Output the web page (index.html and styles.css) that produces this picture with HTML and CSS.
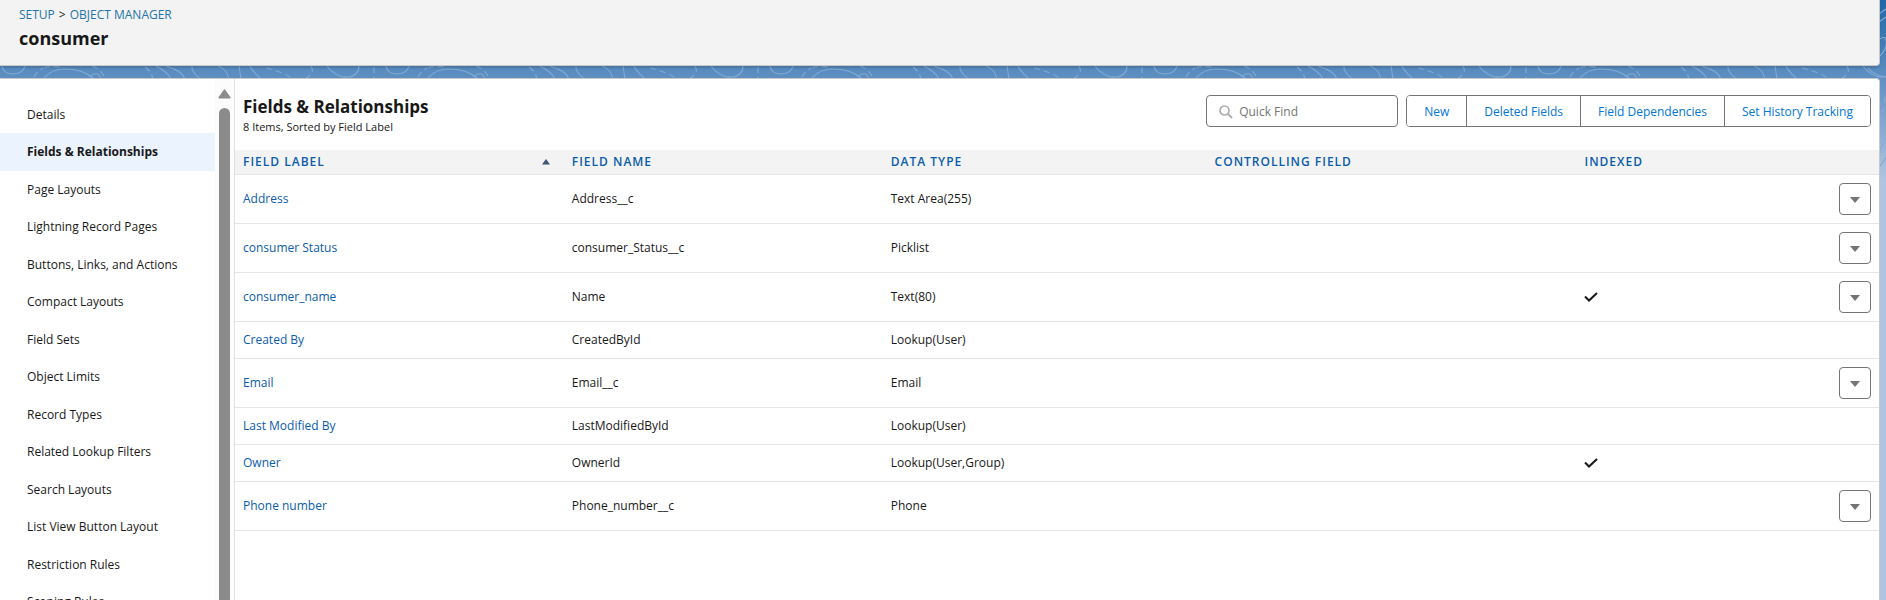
FILE: index.html
```html
<!DOCTYPE html>
<html lang="en">
<head>
<meta charset="utf-8">
<title>consumer | Object Manager</title>
<link rel="stylesheet" href="styles.css">
</head>
<body>
<svg class="backdrop" aria-hidden="true">
  <defs>
    <pattern id="contours" x="44" y="66" width="384" height="600" patternUnits="userSpaceOnUse">
      <g class="contour">
        <path d="M0 12C6 5 12 3 21 3C33 3 42 6 49 12M46 11C49 6 57 7 56 12M112 0C118 3 124 7 127 13M122 0C132 3 139 7 141 13M148 0C147 5 151 9 157 13M174 0C181 3 185 8 184 13M195 0L197 13M206 0C208 5 212 8 217 13M283 0C287 6 296 12 303 11C311 11 315 6 315 0M342 0C343 6 348 8 353 8C359 8 364 5 365 0"/>
        <path class="dash" d="M0 2C5 0 10 0 16 1M48 0C54 2 57 5 60 10M101 1C105 4 108 8 109 13M222 2C234 5 242 8 249 13M267 0C270 5 268 9 261 13M330 1V13M374 11C376 7 379 4 383 2"/>
      </g>
    </pattern>
  </defs>
  <rect width="100%" height="78" y="0" fill="url(#contours)"/>
</svg>
<svg class="edge" viewBox="0 0 18 200" aria-hidden="true">
  <g class="contour">
    <path d="M11 14L18 9M11 22L18 17M12 39C18 34 20 42 17 49C15 53 13 55 12 56M-2 66C4 73 10 76 18 77M12 150C14 146 16 142 18 137M12 166C15 162 16 160 18 158"/>
    <path class="dash" d="M12 122C15 112 16 106 17 96"/>
  </g>
</svg>
<header class="page-header">
  <nav class="crumbs" aria-label="Breadcrumb"><a href="#">SETUP</a><span>&gt;</span><a href="#">OBJECT MANAGER</a></nav>
  <h1>consumer</h1>
</header>
<div class="card">
  <aside class="sidebar">
    <nav class="side-nav" aria-label="Object settings">
      <a href="#">Details</a>
      <a href="#" class="active" aria-current="page">Fields &amp; Relationships</a>
      <a href="#">Page Layouts</a>
      <a href="#">Lightning Record Pages</a>
      <a href="#">Buttons, Links, and Actions</a>
      <a href="#">Compact Layouts</a>
      <a href="#">Field Sets</a>
      <a href="#">Object Limits</a>
      <a href="#">Record Types</a>
      <a href="#">Related Lookup Filters</a>
      <a href="#">Search Layouts</a>
      <a href="#">List View Button Layout</a>
      <a href="#">Restriction Rules</a>
      <a href="#">Scoping Rules</a>
    </nav>
    <div class="scrollbar" aria-hidden="true">
      <svg width="13" height="10" viewBox="0 0 13 10"><path d="M6.500 1.200L11.800 8.800H1.200Z" fill="#8b8b8b" stroke="#8b8b8b" stroke-width="1.600" stroke-linejoin="round"/></svg>
      <div class="thumb"></div>
    </div>
  </aside>
  <main class="content">
    <div class="toolbar">
      <div class="heading">
        <h2>Fields &amp; Relationships</h2>
        <p>8 Items, Sorted by Field Label</p>
      </div>
      <label class="search">
        <svg width="14" height="14" viewBox="0 0 14 14" aria-hidden="true"><circle cx="5.500" cy="5.500" r="4.500" fill="none" stroke="#aeaeae" stroke-width="1.700"/><path d="M9 9L13 13" stroke="#aeaeae" stroke-width="2"/></svg>
        <input type="search" placeholder="Quick Find" aria-label="Quick Find">
      </label>
      <div class="button-group">
        <button type="button">New</button>
        <button type="button">Deleted Fields</button>
        <button type="button">Field Dependencies</button>
        <button type="button">Set History Tracking</button>
      </div>
    </div>
    <table>
      <colgroup><col class="c-label"><col class="c-name"><col class="c-type"><col class="c-control"><col class="c-indexed"><col class="c-action"></colgroup>
      <thead>
        <tr>
          <th scope="col"><span class="sorted">FIELD LABEL<svg width="8" height="6" viewBox="0 0 8 6" aria-hidden="true"><path d="M4 0L8 5.500H0Z" fill="#3e5574"/></svg></span></th>
          <th scope="col">FIELD NAME</th><th scope="col">DATA TYPE</th><th scope="col">CONTROLLING FIELD</th><th scope="col">INDEXED</th><th></th>
        </tr>
      </thead>
      <tbody>
        <tr class="tall"><td><a href="#">Address</a></td><td>Address__c</td><td>Text Area(255)</td><td></td><td></td><td><button type="button" class="menu" aria-label="Actions for Address"><svg width="10" height="6" viewBox="0 0 10 6"><path d="M0 0H10L5 6Z"/></svg></button></td></tr>
        <tr class="tall"><td><a href="#">consumer Status</a></td><td>consumer_Status__c</td><td>Picklist</td><td></td><td></td><td><button type="button" class="menu" aria-label="Actions for consumer Status"><svg width="10" height="6" viewBox="0 0 10 6"><path d="M0 0H10L5 6Z"/></svg></button></td></tr>
        <tr class="tall"><td><a href="#">consumer_name</a></td><td>Name</td><td>Text(80)</td><td></td><td><svg class="check" width="14" height="10" viewBox="0 0 14 10" role="img" aria-label="Indexed"><path d="M1 4.500L5 8.500L13 1"/></svg></td><td><button type="button" class="menu" aria-label="Actions for consumer_name"><svg width="10" height="6" viewBox="0 0 10 6"><path d="M0 0H10L5 6Z"/></svg></button></td></tr>
        <tr><td><a href="#">Created By</a></td><td>CreatedById</td><td>Lookup(User)</td><td></td><td></td><td></td></tr>
        <tr class="tall"><td><a href="#">Email</a></td><td>Email__c</td><td>Email</td><td></td><td></td><td><button type="button" class="menu" aria-label="Actions for Email"><svg width="10" height="6" viewBox="0 0 10 6"><path d="M0 0H10L5 6Z"/></svg></button></td></tr>
        <tr><td><a href="#">Last Modified By</a></td><td>LastModifiedById</td><td>Lookup(User)</td><td></td><td></td><td></td></tr>
        <tr><td><a href="#">Owner</a></td><td>OwnerId</td><td>Lookup(User,Group)</td><td></td><td><svg class="check" width="14" height="10" viewBox="0 0 14 10" role="img" aria-label="Indexed"><path d="M1 4.500L5 8.500L13 1"/></svg></td><td></td></tr>
        <tr class="tall"><td><a href="#">Phone number</a></td><td>Phone_number__c</td><td>Phone</td><td></td><td></td><td><button type="button" class="menu" aria-label="Actions for Phone number"><svg width="10" height="6" viewBox="0 0 10 6"><path d="M0 0H10L5 6Z"/></svg></button></td></tr>
      </tbody>
    </table>
  </main>
</div>
</body>
</html>
```
FILE: styles.css
```css
* { box-sizing: border-box; }

body {
  margin: 0;
  height: 100vh;
  display: flex;
  flex-direction: column;
  gap: 12px;
  padding-right: 6px;
  overflow: hidden;
  position: relative;
  background: #b0c4df linear-gradient(#1f67a9 0, #5a8cc0 72px, #b0c4df 180px) no-repeat;
  color: #181818;
  font: 12px/18px "Open Sans", "Noto Sans", sans-serif;
}

a { color: #0b5cab; text-decoration: none; }

h1, h2, p { margin: 0; }

.backdrop {
  position: absolute;
  left: 0;
  top: 0;
  width: 100%;
  height: 78px;
}

.edge {
  position: absolute;
  right: 0;
  top: 0;
  width: 18px;
  height: 200px;
}

.contour { fill: none; stroke: #84aad3; stroke-width: 1.1; }
.dash { stroke-dasharray: 6 4; }

.page-header {
  position: relative;
  padding: 6px 19px 13px;
  background: #f3f3f3;
  border: solid #c9c9c9;
  border-width: 0 1px 1px 0;
  border-radius: 0 0 4px 0;
  box-shadow: 0 2px 2px rgba(0, 0, 0, .15);
}

.crumbs { display: flex; gap: 4px; }
.crumbs a { color: #2574a9; }

h1 { font-size: 18px; line-height: 28px; }

.card {
  position: relative;
  flex: 1;
  min-height: 0;
  display: flex;
  background: #fff;
  border: solid #c9c9c9;
  border-width: 1px 1px 0 0;
  border-radius: 0 4px 0 0;
  overflow: hidden;
}

.sidebar {
  flex: none;
  width: 235px;
  display: flex;
  border-right: 1px solid #e0e0e0;
}

.side-nav {
  flex: 1;
  display: flex;
  flex-direction: column;
  padding-top: 17px;
  overflow: hidden;
}

.side-nav a {
  flex: none;
  height: 37px;
  padding-left: 27px;
  line-height: 37px;
  color: #181818;
}
.side-nav a:nth-child(even) { height: 38px; line-height: 38px; }
.side-nav .active { background: #eaf3fe; font-weight: 700; }

.scrollbar {
  width: 19px;
  display: flex;
  flex-direction: column;
  align-items: center;
  gap: 9px;
  padding-top: 10px;
  background: #fcfcfc;
}
.scrollbar svg { flex: none; }
.thumb {
  flex: 1;
  width: 11px;
  background: #8b8b8b;
  border-radius: 6px 6px 0 0;
}

.content { flex: 1; min-width: 0; }

.toolbar {
  display: flex;
  align-items: flex-start;
  gap: 8px;
  padding: 16px 8px 15px;
}
.heading { flex: 1; }
h2 { font-size: 17px; line-height: 24px; }
.heading p { font-size: 11px; line-height: 16px; }

.search {
  width: 192px;
  height: 32px;
  display: flex;
  align-items: center;
  gap: 6px;
  padding: 2px 12px 0;
  border: 1px solid #747474;
  border-radius: 4px;
}
.search svg { flex: none; }
.search input {
  flex: 1;
  min-width: 0;
  padding: 0;
  border: 0;
  outline: 0;
  background: none;
  font: inherit;
}
.search input::placeholder { color: #747474; opacity: 1; }

.button-group {
  display: flex;
  height: 32px;
  border: 1px solid #747474;
  border-radius: 4px;
  overflow: hidden;
}
.button-group button {
  padding: 1px 17px 0;
  border: 0;
  background: #fff;
  color: #0176d3;
  font: inherit;
}
.button-group button + button { border-left: 1px solid #747474; }

table {
  width: 100%;
  table-layout: fixed;
  border-collapse: separate;
  border-spacing: 0;
}
.c-label { width: 20%; }
.c-name { width: 19.4%; }
.c-type { width: 19.7%; }
.c-control { width: 22.5%; }
.c-action { width: 48px; }

th, td {
  padding: 0 8px;
  border-bottom: 1px solid #e5e5e5;
  text-align: left;
}
th {
  height: 25px;
  background: #f3f3f3;
  color: #0b5cab;
  font-size: 12px;
  font-weight: 600;
  letter-spacing: 1px;
}
td { height: 37px; }
.tall td { height: 49px; }
td:last-child { text-align: right; }

.sorted {
  display: flex;
  align-items: center;
  justify-content: space-between;
  padding-right: 6px;
}

.check {
  display: block;
  fill: none;
  stroke: #181818;
  stroke-width: 2;
}

.menu {
  width: 32px;
  height: 32px;
  display: inline-flex;
  align-items: center;
  justify-content: center;
  vertical-align: middle;
  padding: 2px 0 0;
  border: 1px solid #747474;
  border-radius: 4px;
  background: #fff;
}
.menu svg { fill: #747474; }
```
